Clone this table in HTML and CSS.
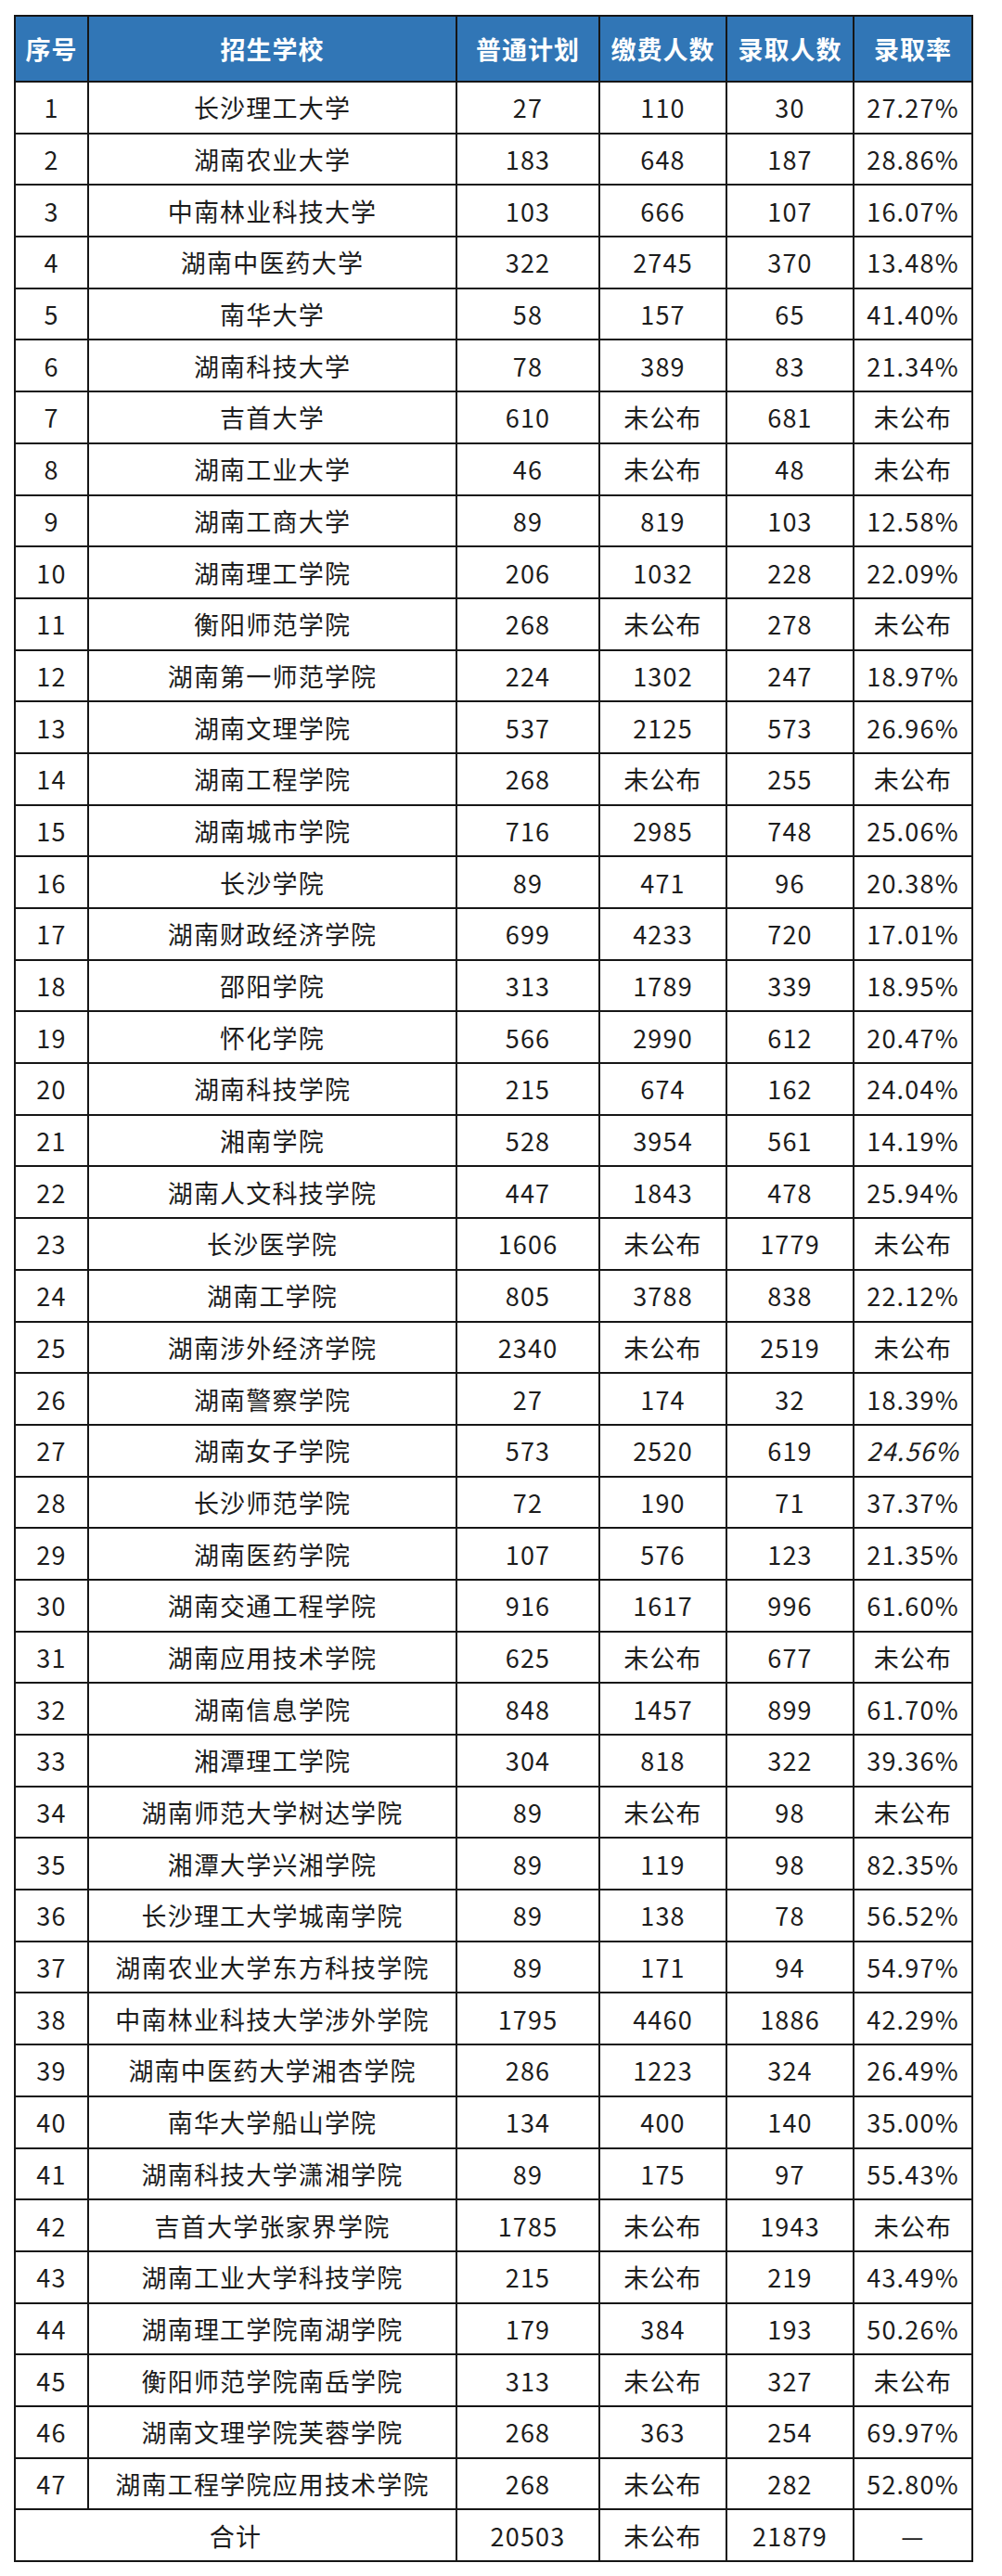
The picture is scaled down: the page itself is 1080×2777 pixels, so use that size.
FILE: index.html
```html
<!DOCTYPE html>
<html lang="zh-CN">
<head>
<meta charset="utf-8">
<link rel="stylesheet" href="styles.css">
</head>
<body>
<div class="page">
<table class="grid">
<colgroup>
<col class="c-no"><col class="c-name"><col class="c-plan"><col class="c-paid"><col class="c-adm"><col class="c-rate">
</colgroup>
<thead>
<tr><th>序号</th><th>招生学校</th><th>普通计划</th><th>缴费人数</th><th>录取人数</th><th>录取率</th></tr>
</thead>
<tbody>
<tr><td>1</td><td>长沙理工大学</td><td>27</td><td>110</td><td>30</td><td>27.27%</td></tr>
<tr><td>2</td><td>湖南农业大学</td><td>183</td><td>648</td><td>187</td><td>28.86%</td></tr>
<tr><td>3</td><td>中南林业科技大学</td><td>103</td><td>666</td><td>107</td><td>16.07%</td></tr>
<tr><td>4</td><td>湖南中医药大学</td><td>322</td><td>2745</td><td>370</td><td>13.48%</td></tr>
<tr><td>5</td><td>南华大学</td><td>58</td><td>157</td><td>65</td><td>41.40%</td></tr>
<tr><td>6</td><td>湖南科技大学</td><td>78</td><td>389</td><td>83</td><td>21.34%</td></tr>
<tr><td>7</td><td>吉首大学</td><td>610</td><td>未公布</td><td>681</td><td>未公布</td></tr>
<tr><td>8</td><td>湖南工业大学</td><td>46</td><td>未公布</td><td>48</td><td>未公布</td></tr>
<tr><td>9</td><td>湖南工商大学</td><td>89</td><td>819</td><td>103</td><td>12.58%</td></tr>
<tr><td>10</td><td>湖南理工学院</td><td>206</td><td>1032</td><td>228</td><td>22.09%</td></tr>
<tr><td>11</td><td>衡阳师范学院</td><td>268</td><td>未公布</td><td>278</td><td>未公布</td></tr>
<tr><td>12</td><td>湖南第一师范学院</td><td>224</td><td>1302</td><td>247</td><td>18.97%</td></tr>
<tr><td>13</td><td>湖南文理学院</td><td>537</td><td>2125</td><td>573</td><td>26.96%</td></tr>
<tr><td>14</td><td>湖南工程学院</td><td>268</td><td>未公布</td><td>255</td><td>未公布</td></tr>
<tr><td>15</td><td>湖南城市学院</td><td>716</td><td>2985</td><td>748</td><td>25.06%</td></tr>
<tr><td>16</td><td>长沙学院</td><td>89</td><td>471</td><td>96</td><td>20.38%</td></tr>
<tr><td>17</td><td>湖南财政经济学院</td><td>699</td><td>4233</td><td>720</td><td>17.01%</td></tr>
<tr><td>18</td><td>邵阳学院</td><td>313</td><td>1789</td><td>339</td><td>18.95%</td></tr>
<tr><td>19</td><td>怀化学院</td><td>566</td><td>2990</td><td>612</td><td>20.47%</td></tr>
<tr><td>20</td><td>湖南科技学院</td><td>215</td><td>674</td><td>162</td><td>24.04%</td></tr>
<tr><td>21</td><td>湘南学院</td><td>528</td><td>3954</td><td>561</td><td>14.19%</td></tr>
<tr><td>22</td><td>湖南人文科技学院</td><td>447</td><td>1843</td><td>478</td><td>25.94%</td></tr>
<tr><td>23</td><td>长沙医学院</td><td>1606</td><td>未公布</td><td>1779</td><td>未公布</td></tr>
<tr><td>24</td><td>湖南工学院</td><td>805</td><td>3788</td><td>838</td><td>22.12%</td></tr>
<tr><td>25</td><td>湖南涉外经济学院</td><td>2340</td><td>未公布</td><td>2519</td><td>未公布</td></tr>
<tr><td>26</td><td>湖南警察学院</td><td>27</td><td>174</td><td>32</td><td>18.39%</td></tr>
<tr><td>27</td><td>湖南女子学院</td><td>573</td><td>2520</td><td>619</td><td class="it">24.56%</td></tr>
<tr><td>28</td><td>长沙师范学院</td><td>72</td><td>190</td><td>71</td><td>37.37%</td></tr>
<tr><td>29</td><td>湖南医药学院</td><td>107</td><td>576</td><td>123</td><td>21.35%</td></tr>
<tr><td>30</td><td>湖南交通工程学院</td><td>916</td><td>1617</td><td>996</td><td>61.60%</td></tr>
<tr><td>31</td><td>湖南应用技术学院</td><td>625</td><td>未公布</td><td>677</td><td>未公布</td></tr>
<tr><td>32</td><td>湖南信息学院</td><td>848</td><td>1457</td><td>899</td><td>61.70%</td></tr>
<tr><td>33</td><td>湘潭理工学院</td><td>304</td><td>818</td><td>322</td><td>39.36%</td></tr>
<tr><td>34</td><td>湖南师范大学树达学院</td><td>89</td><td>未公布</td><td>98</td><td>未公布</td></tr>
<tr><td>35</td><td>湘潭大学兴湘学院</td><td>89</td><td>119</td><td>98</td><td>82.35%</td></tr>
<tr><td>36</td><td>长沙理工大学城南学院</td><td>89</td><td>138</td><td>78</td><td>56.52%</td></tr>
<tr><td>37</td><td>湖南农业大学东方科技学院</td><td>89</td><td>171</td><td>94</td><td>54.97%</td></tr>
<tr><td>38</td><td>中南林业科技大学涉外学院</td><td>1795</td><td>4460</td><td>1886</td><td>42.29%</td></tr>
<tr><td>39</td><td>湖南中医药大学湘杏学院</td><td>286</td><td>1223</td><td>324</td><td>26.49%</td></tr>
<tr><td>40</td><td>南华大学船山学院</td><td>134</td><td>400</td><td>140</td><td>35.00%</td></tr>
<tr><td>41</td><td>湖南科技大学潇湘学院</td><td>89</td><td>175</td><td>97</td><td>55.43%</td></tr>
<tr><td>42</td><td>吉首大学张家界学院</td><td>1785</td><td>未公布</td><td>1943</td><td>未公布</td></tr>
<tr><td>43</td><td>湖南工业大学科技学院</td><td>215</td><td>未公布</td><td>219</td><td>43.49%</td></tr>
<tr><td>44</td><td>湖南理工学院南湖学院</td><td>179</td><td>384</td><td>193</td><td>50.26%</td></tr>
<tr><td>45</td><td>衡阳师范学院南岳学院</td><td>313</td><td>未公布</td><td>327</td><td>未公布</td></tr>
<tr><td>46</td><td>湖南文理学院芙蓉学院</td><td>268</td><td>363</td><td>254</td><td>69.97%</td></tr>
<tr><td>47</td><td>湖南工程学院应用技术学院</td><td>268</td><td>未公布</td><td>282</td><td>52.80%</td></tr>
<tr><td colspan="2">合计</td><td>20503</td><td>未公布</td><td>21879</td><td>—</td></tr>
</tbody>
</table>
</div>
</body>
</html>
```
FILE: styles.css
```css
html, body {
  margin: 0;
  padding: 0;
  background: #ffffff;
}
.page {
  padding: 16px 0 0 15px;
}
.grid {
  border-collapse: collapse;
  table-layout: fixed;
  width: 1032px;
  font-family: "Noto Sans CJK SC", "Noto Sans", sans-serif;
  color: #1c1c1c;
}
.c-no { width: 79px; }
.c-name { width: 397px; }
.c-plan { width: 154px; }
.c-paid { width: 137px; }
.c-adm { width: 137px; }
.c-rate { width: 128px; }
.grid th, .grid td {
  border: 2px solid #161616;
  text-align: center;
  padding: 0;
  white-space: nowrap;
}
.grid th {
  background: #3176b6;
  color: #ffffff;
  font-weight: 700;
  font-size: 27px;
  letter-spacing: 1px;
  height: 69px;
}
.grid td {
  font-size: 27px;
  letter-spacing: 1.2px;
  font-weight: 400;
  height: 53.7px;
  line-height: 1;
}
.grid td.it {
  font-style: italic;
}
```
